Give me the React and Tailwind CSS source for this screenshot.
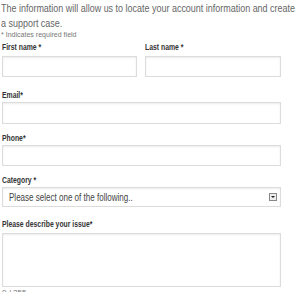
export default function App() {
  const input = "block border border-[#dcdcdc] bg-white shadow-[inset_0_1px_2px_rgba(0,0,0,0.08)]";
  const label = "block text-[9.5px] leading-[10px] font-bold text-[#333] whitespace-nowrap origin-left scale-x-[0.72]";
  return (
    <div className="w-[300px] h-[292px] overflow-hidden bg-white pl-[1px]" style={{ fontFamily: '"Liberation Sans", Arial, sans-serif' }}>
      <p className="text-[11px] leading-[16px] text-[#666] whitespace-nowrap origin-left scale-x-[0.815]">The information will allow us to locate your account information and create</p>
      <p className="text-[11px] leading-[14px] text-[#666] whitespace-nowrap origin-left scale-x-[0.815]">a support case.</p>
      <p className="text-[8px] leading-[9px] text-[#777] whitespace-nowrap origin-left scale-x-[0.88]">* Indicates required field</p>
      <div className="mt-[3px] flex gap-[8px] pl-[1px]">
        <div className="w-[135px]">
          <span className={label}>First name *</span>
          <div className={`${input} mt-[4px] w-[135px] h-[21px]`} />
        </div>
        <div className="w-[136px]">
          <span className={label}>Last name *</span>
          <div className={`${input} mt-[4px] w-[136px] h-[21px]`} />
        </div>
      </div>
      <div className="pl-[1px]">
        <span className={`${label} mt-[13px]`}>Email*</span>
        <div className={`${input} mt-[2px] w-[279px] h-[22px]`} />
        <span className={`${label} mt-[9px]`}>Phone*</span>
        <div className={`${input} mt-[2px] w-[279px] h-[21px]`} />
        <span className={`${label} mt-[9px]`}>Category *</span>
        <div className={`${input} mt-[2px] w-[279px] h-[20px] flex items-center justify-between pl-[6px] pr-[3px]`}>
          <span className="text-[11px] text-[#444] whitespace-nowrap origin-left scale-x-[0.73] inline-block">Please select one of the following..</span>
          <span className="w-[8px] h-[8px] border border-[#888] bg-[#eee] flex items-center justify-center">
            <span className="w-0 h-0 border-l-[2px] border-r-[2px] border-t-[2px] border-l-transparent border-r-transparent border-t-[#222]" />
          </span>
        </div>
        <span className={`${label} mt-[12px]`}>Please describe your issue*</span>
        <div className={`${input} mt-[4px] w-[279px] h-[54px]`} />
        <span className="block mt-[1px] text-[8px] leading-[10px] text-[#777]">0 / 255</span>
      </div>
    </div>
  );
}
